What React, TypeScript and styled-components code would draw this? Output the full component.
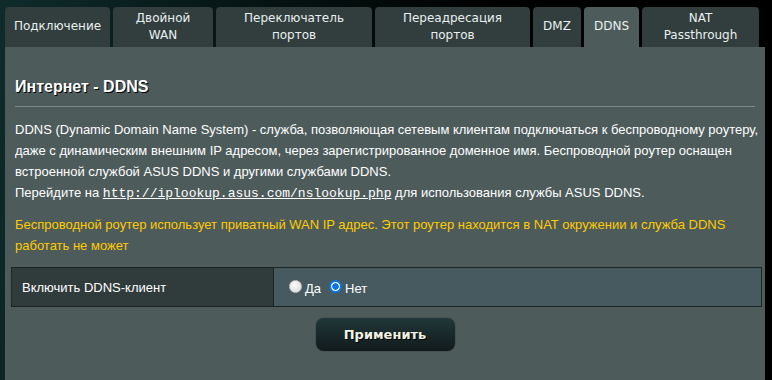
import styled, { createGlobalStyle } from 'styled-components';

const GlobalStyle = createGlobalStyle`
  html, body {
    margin: 0;
    padding: 0;
  }
  body {
    background: linear-gradient(100deg, #0f2b2b 0%, #061414 30%, #000 60%);
    min-height: 380px;
    font-family: 'Liberation Sans', Arial, sans-serif;
    overflow: hidden;
  }
`;

const Page = styled.div`
  padding: 7px 7px 0 5px;
  width: 760px;
`;

const TabBar = styled.div`
  display: flex;
  gap: 3px;
  height: 40px;
`;

const Tab = styled.div<{ $w: number; $active?: boolean }>`
  width: ${(p) => p.$w}px;
  height: 40px;
  box-sizing: border-box;
  border-radius: 4px 4px 0 0;
  background: ${(p) => (p.$active ? '#4d5b5b' : '#323d3d')};
  color: #e8f0f0;
  font-family: 'DejaVu Sans', Verdana, sans-serif;
  font-size: 12px;
  line-height: 17px;
  text-align: center;
  white-space: pre-line;
  display: flex;
  align-items: center;
  justify-content: center;
  padding-bottom: 1px;
`;

const Panel = styled.div`
  background: #4d5b5b;
  min-height: 340px;
  padding: 30px 3px 20px 6px;
  box-sizing: border-box;
`;

const Heading = styled.div`
  font-size: 16px;
  font-weight: bold;
  color: #fff;
  text-shadow: 1px 1px 0 #000;
  line-height: 19px;
  padding-left: 4px;
`;

const Divider = styled.div`
  height: 1px;
  background: #7b8b8c;
  margin: 10px 0 0 4px;
  width: 740px;
`;

const Desc = styled.div`
  margin: 12px 0 0 4px;
  width: 745px;
  font-size: 13px;
  line-height: 21px;
  color: #fff;
`;

const Link = styled.a`
  font-family: 'Liberation Mono', 'DejaVu Sans Mono', monospace;
  font-size: 13px;
  color: #fff;
  text-decoration: underline;
`;

const Warning = styled.div`
  margin: 10px 0 0 4px;
  width: 745px;
  font-size: 13px;
  line-height: 21px;
  color: #ffcc00;
`;

const Table = styled.div`
  display: grid;
  grid-template-columns: 262px 1fr;
  margin-top: 11px;
  border: 1px solid #1d2424;
  height: 40px;
  box-sizing: border-box;
`;

const LabelCell = styled.div`
  background: #303b3b;
  border-right: 1px solid #1d2424;
  color: #fff;
  font-size: 13px;
  display: flex;
  align-items: center;
  padding-left: 10px;
`;

const ValueCell = styled.div`
  background: #475a5f;
  color: #fff;
  font-size: 13px;
  display: flex;
  align-items: center;
  padding-left: 15px;
`;

const RadioLabel = styled.label`
  display: flex;
  align-items: center;
  margin-right: 8px;
  padding-top: 2px;
`;

const Radio = styled.input.attrs({ type: 'radio' })`
  appearance: none;
  width: 13px;
  height: 13px;
  margin: 0 3px 4px 0;
  border-radius: 50%;
  box-sizing: border-box;
  background: radial-gradient(circle at 40% 35%, #fafafa, #d8d8d8);
  border: 1px solid #c4c4c4;
  &:checked {
    background: radial-gradient(circle, #0a74e6 0 3px, #fff 3.5px);
    border: 2px solid #0a74e6;
  }
`;

const ButtonRow = styled.div`
  display: flex;
  justify-content: center;
  margin-top: 11px;
  padding-right: 3px;
`;

const ApplyButton = styled.button`
  width: 139px;
  height: 33px;
  border: none;
  border-radius: 8px;
  background: linear-gradient(#213739 0%, #111a1b 100%);
  box-shadow: 0 0 1px #0a0f0f;
  color: #f2f2e4;
  font-family: 'DejaVu Sans', Verdana, sans-serif;
  font-weight: bold;
  font-size: 13px;
  text-shadow: 1px 1px 0 #000;
`;

const tabs = [
  { label: 'Подключение', w: 105 },
  { label: 'Двойной\nWAN', w: 100 },
  { label: 'Переключатель\nпортов', w: 156 },
  { label: 'Переадресация\nпортов', w: 155 },
  { label: 'DMZ', w: 48 },
  { label: 'DDNS', w: 55, active: true },
  { label: 'NAT\nPassthrough', w: 117 },
];

export default function App() {
  return (
    <>
      <GlobalStyle />
      <Page>
        <TabBar>
          {tabs.map((t) => (
            <Tab key={t.label} $w={t.w} $active={t.active}>
              {t.label}
            </Tab>
          ))}
        </TabBar>
        <Panel>
          <Heading>Интернет - DDNS</Heading>
          <Divider />
          <Desc>
            DDNS (Dynamic Domain Name System) - служба, позволяющая сетевым клиентам подключаться к
            беспроводному роутеру, даже с динамическим внешним IP адресом, через зарегистрированное
            доменное имя. Беспроводной роутер оснащен встроенной службой ASUS DDNS и другими службами
            DDNS.
            <br />
            Перейдите на <Link href="#">http://iplookup.asus.com/nslookup.php</Link> для
            использования службы ASUS DDNS.
          </Desc>
          <Warning>
            Беспроводной роутер использует приватный WAN IP адрес. Этот роутер находится в NAT
            окружении и служба DDNS работать не может
          </Warning>
          <Table>
            <LabelCell>Включить DDNS-клиент</LabelCell>
            <ValueCell>
              <RadioLabel>
                <Radio name="ddns" />
                Да
              </RadioLabel>
              <RadioLabel>
                <Radio name="ddns" defaultChecked />
                Нет
              </RadioLabel>
            </ValueCell>
          </Table>
          <ButtonRow>
            <ApplyButton>Применить</ApplyButton>
          </ButtonRow>
        </Panel>
      </Page>
    </>
  );
}
